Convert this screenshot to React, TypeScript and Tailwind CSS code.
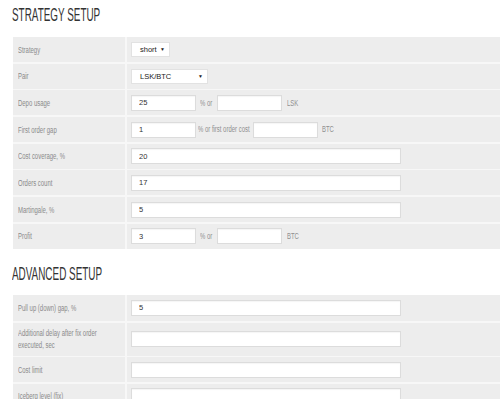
import React from "react";

const narrow = "inline-block origin-left scale-x-[0.7] whitespace-nowrap";

function Heading({ children, className }: { children: React.ReactNode; className?: string }) {
  return (
    <h2
      className={`ml-[12px] h-[18px] text-[18px] leading-[18px] text-[#333] ${className ?? ""}`}
      style={{ fontFamily: '"Liberation Sans", Arial, sans-serif' }}
    >
      <span className="inline-block origin-left scale-x-[0.55] whitespace-nowrap">{children}</span>
    </h2>
  );
}

function Field({ w, value }: { w: string; value?: string }) {
  return (
    <input
      readOnly
      defaultValue={value}
      className={`${w} h-[16px] shrink-0 border border-[#dcdcdc] bg-white px-[7px] text-[7.5px] text-[#333] shadow-[inset_0_1px_1px_rgba(0,0,0,0.04)] outline-none`}
    />
  );
}

function Select({ w, value }: { w: string; value: string }) {
  return (
    <div
      className={`${w} flex h-[15px] items-center justify-between border border-[#e2e2e2] bg-white pl-[8px] pr-[4px] text-[7.5px] text-[#222]`}
    >
      <span>{value}</span>
      <span className="text-[5px] leading-none">▼</span>
    </div>
  );
}

function Note({ w, text, pl = "pl-[4px]" }: { w: string; text: string; pl?: string }) {
  return (
    <span className={`${w} ${pl} shrink-0 text-[8.5px] text-[#8f8f8f]`}>
      <span className={narrow}>{text}</span>
    </span>
  );
}

function Row({ label, h = "h-[25px]", wrap, children }: { label: string; h?: string; wrap?: boolean; children?: React.ReactNode }) {
  return (
    <div className={`flex ${h} gap-[2px]`}>
      <div className="flex w-[112px] shrink-0 items-center bg-[#ededed] pl-[5px] text-[8.5px] leading-[12px] text-[#8a8a8a]">
        {wrap ? (
          <span className="inline-block w-[135px] shrink-0 origin-left scale-x-[0.7]">{label}</span>
        ) : (
          <span className={narrow}>{label}</span>
        )}
      </div>
      <div className="flex flex-1 items-center bg-[#ededed] pl-[4px]">{children}</div>
    </div>
  );
}

export default function App() {
  return (
    <div
      className="h-[399px] w-[500px] overflow-hidden bg-white pt-[6px]"
      style={{ fontFamily: '"Liberation Sans", Arial, sans-serif' }}
    >
      <Heading>STRATEGY SETUP</Heading>

      <div className="ml-[13px] mt-[13px] flex flex-col gap-[1.7px] bg-[#f7f7f7]">
        <Row label="Strategy">
          <Select w="w-[39px]" value="short" />
        </Row>
        <Row label="Pair">
          <Select w="w-[77px]" value="LSK/BTC" />
        </Row>
        <Row label="Depo usage">
          <Field w="w-[65px]" value="25" />
          <Note w="w-[21px]" text="%  or" />
          <Field w="w-[65px]" />
          <Note w="w-[30px]" pl="pl-[5px]" text="LSK" />
        </Row>
        <Row label="First order gap">
          <Field w="w-[65px]" value="1" />
          <Note w="w-[57px]" pl="pl-[2px]" text="% or first order cost" />
          <Field w="w-[65px]" />
          <Note w="w-[30px]" pl="pl-[4px]" text="BTC" />
        </Row>
        <Row label="Cost coverage, %">
          <Field w="w-[270px]" value="20" />
        </Row>
        <Row label="Orders count">
          <Field w="w-[270px]" value="17" />
        </Row>
        <Row label="Martingale, %">
          <Field w="w-[270px]" value="5" />
        </Row>
        <Row label="Profit">
          <Field w="w-[65px]" value="3" />
          <Note w="w-[21px]" text="%  or" />
          <Field w="w-[65px]" />
          <Note w="w-[30px]" pl="pl-[5px]" text="BTC" />
        </Row>
      </div>

      <Heading className="mt-[16px]">ADVANCED SETUP</Heading>

      <div className="ml-[13px] mt-[12px] flex flex-col gap-[1.7px] bg-[#f7f7f7]">
        <Row label="Pull up (down) gap, %" h="h-[26px]">
          <Field w="w-[270px]" value="5" />
        </Row>
        <Row label="Additional delay after fix order executed, sec" h="h-[33px]" wrap>
          <Field w="w-[270px]" />
        </Row>
        <Row label="Cost limit" h="h-[25px]">
          <Field w="w-[270px]" />
        </Row>
        <Row label="Iceberg level (fix)" h="h-[25px]">
          <Field w="w-[270px]" />
        </Row>
      </div>
    </div>
  );
}
